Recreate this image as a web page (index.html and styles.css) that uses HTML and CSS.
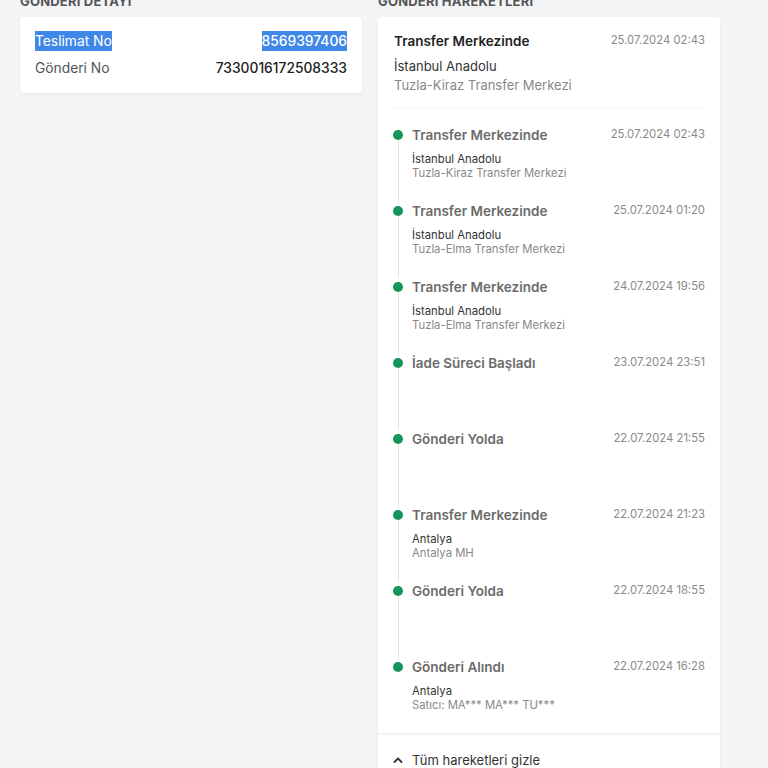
FILE: index.html
```html
<!DOCTYPE html>
<html lang="tr">
<head>
<meta charset="utf-8">
<title>Gönderi</title>
<link rel="stylesheet" href="styles.css">
</head>
<body>
<div class="page">
  <section class="col">
    <h2 class="heading">Gönderi Detayı</h2>
    <div class="card detail">
      <div class="row"><span class="label sel">Teslimat No</span><span class="value sel">8569397406</span></div>
      <div class="row"><span class="label">Gönderi No</span><span class="value">7330016172508333</span></div>
    </div>
  </section>
  <section class="col">
    <h2 class="heading">Gönderi Hareketleri</h2>
    <div class="card moves">
      <div class="current">
        <div class="cur-head"><span class="cur-title">Transfer Merkezinde</span><span class="date">25.07.2024 02:43</span></div>
        <div class="cur-city">İstanbul Anadolu</div>
        <div class="cur-place">Tuzla-Kiraz Transfer Merkezi</div>
      </div>
      <ul class="timeline">
        <li class="item"><span class="marker"><span class="dot"></span><span class="line"></span></span><span class="title">Transfer Merkezinde</span><span class="date">25.07.2024 02:43</span><span class="info"><span class="city">İstanbul Anadolu</span><span class="place">Tuzla-Kiraz Transfer Merkezi</span></span></li>
        <li class="item"><span class="marker"><span class="dot"></span><span class="line"></span></span><span class="title">Transfer Merkezinde</span><span class="date">25.07.2024 01:20</span><span class="info"><span class="city">İstanbul Anadolu</span><span class="place">Tuzla-Elma Transfer Merkezi</span></span></li>
        <li class="item"><span class="marker"><span class="dot"></span><span class="line"></span></span><span class="title">Transfer Merkezinde</span><span class="date">24.07.2024 19:56</span><span class="info"><span class="city">İstanbul Anadolu</span><span class="place">Tuzla-Elma Transfer Merkezi</span></span></li>
        <li class="item"><span class="marker"><span class="dot"></span><span class="line"></span></span><span class="title">İade Süreci Başladı</span><span class="date">23.07.2024 23:51</span></li>
        <li class="item"><span class="marker"><span class="dot"></span><span class="line"></span></span><span class="title">Gönderi Yolda</span><span class="date">22.07.2024 21:55</span></li>
        <li class="item"><span class="marker"><span class="dot"></span><span class="line"></span></span><span class="title">Transfer Merkezinde</span><span class="date">22.07.2024 21:23</span><span class="info"><span class="city">Antalya</span><span class="place">Antalya MH</span></span></li>
        <li class="item"><span class="marker"><span class="dot"></span><span class="line"></span></span><span class="title">Gönderi Yolda</span><span class="date">22.07.2024 18:55</span></li>
        <li class="item last"><span class="marker"><span class="dot"></span></span><span class="title">Gönderi Alındı</span><span class="date">22.07.2024 16:28</span><span class="info"><span class="city">Antalya</span><span class="place">Satıcı: MA*** MA*** TU***</span></span></li>
      </ul>
      <div class="toggle">
        <svg class="chev" width="12" height="12" viewBox="0 0 12 12"><polyline points="2.5,8 6,4.5 9.5,8" fill="none" stroke="#333" stroke-width="1.8" stroke-linecap="round" stroke-linejoin="round"/></svg>
        <span>Tüm hareketleri gizle</span>
      </div>
    </div>
  </section>
</div>
</body>
</html>
```

FILE: styles.css
```css
* { box-sizing: border-box; }
html, body { margin: 0; padding: 0; }
body {
  background: #f3f4f6;
  font-family: Inter, "Noto Sans", "Liberation Sans", sans-serif;
  color: #333;
  overflow: hidden;
}
.page {
  display: grid;
  grid-template-columns: 342px 342px;
  column-gap: 16px;
  padding: 0 20px;
  margin-top: -7px;
  align-items: start;
}
.heading {
  margin: 0 0 8px;
  font-size: 13px;
  line-height: 16px;
  font-weight: 700;
  text-transform: uppercase;
  color: #555;
  letter-spacing: 0.2px;
}
.card {
  background: #fff;
  border-radius: 4px;
  box-shadow: 0 1px 3px rgba(0,0,0,0.06);
}
.detail {
  padding: 14px 15px 15px;
  display: flex;
  flex-direction: column;
  gap: 7px;
}
.row {
  display: flex;
  justify-content: space-between;
  font-size: 13.8px;
  line-height: 20px;
}
.label { color: #555; }
.value { color: #222; font-weight: 500; }
.sel { background: #3f88e8; color: #fff; }
.moves { padding-bottom: 40px; }
.current {
  margin: 0 15px;
  padding: 14px 0 13px 1px;
  border-bottom: 1px solid #f5f5f5;
}
.cur-head {
  display: flex;
  justify-content: space-between;
  align-items: flex-start;
}
.cur-title {
  font-size: 13.5px;
  line-height: 20px;
  font-weight: 600;
  color: #222;
}
.date {
  font-size: 11.3px;
  line-height: 18px;
  color: #8a8a8a;
}
.cur-city {
  margin-top: 5px;
  font-size: 13px;
  line-height: 20px;
  color: #333;
}
.cur-place {
  font-size: 13px;
  line-height: 19px;
  color: #888;
}
.timeline {
  list-style: none;
  margin: 0;
  padding: 16px 15px 0;
}
.item {
  display: grid;
  grid-template-columns: 10px 1fr auto;
  grid-template-rows: 20px 1fr;
  column-gap: 9px;
  height: 76px;
}
.marker {
  grid-row: 1 / span 2;
  grid-column: 1;
  display: flex;
  flex-direction: column;
  align-items: center;
  padding-top: 5px;
}
.dot {
  width: 10px;
  height: 10px;
  border-radius: 50%;
  background: #16955a;
  flex: none;
}
.line {
  flex: 1;
  width: 1px;
  margin-left: 1px;
  background: #e3e3e3;
}
.title {
  grid-column: 2;
  font-size: 13.5px;
  line-height: 20px;
  font-weight: 600;
  color: #6b6b6b;
}
.item .date { grid-column: 3; }
.info {
  grid-column: 2 / span 2;
  grid-row: 2;
  display: flex;
  flex-direction: column;
  padding-top: 7px;
}
.city {
  font-size: 11.3px;
  line-height: 14px;
  color: #333;
}
.place {
  font-size: 11.3px;
  line-height: 14px;
  color: #888;
}
.toggle {
  border-top: 2px solid #f4f4f4;
  padding: 15px 15px 0 14px;
  display: flex;
  align-items: center;
  gap: 8px;
  font-size: 13px;
  line-height: 20px;
  color: #333;
}
.chev { flex: none; }
```
